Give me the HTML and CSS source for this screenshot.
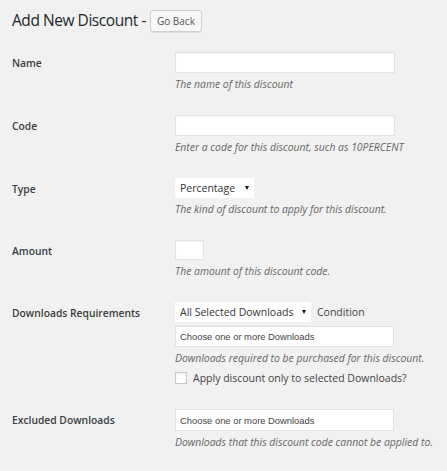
FILE: index.html
```html
<!DOCTYPE html>
<html>
<head>
<meta charset="utf-8">
<link rel="stylesheet" href="styles.css">
</head>
<body>
<div class="wrap">
  <div class="title-row">
    <h1 class="page-title">Add New Discount -</h1>
    <button class="btn">Go Back</button>
  </div>

  <div class="form-row">
    <div class="label">Name</div>
    <div class="field">
      <input class="text wide" type="text">
      <p class="desc">The name of this discount</p>
    </div>
  </div>

  <div class="form-row">
    <div class="label">Code</div>
    <div class="field">
      <input class="text wide" type="text">
      <p class="desc">Enter a code for this discount, such as 10PERCENT</p>
    </div>
  </div>

  <div class="form-row">
    <div class="label">Type</div>
    <div class="field">
      <div class="select type-select">
        <span>Percentage</span><span class="arrow"></span>
      </div>
      <p class="desc">The kind of discount to apply for this discount.</p>
    </div>
  </div>

  <div class="form-row">
    <div class="label">Amount</div>
    <div class="field">
      <input class="text small" type="text">
      <p class="desc">The amount of this discount code.</p>
    </div>
  </div>

  <div class="form-row">
    <div class="label">Downloads Requirements</div>
    <div class="field">
      <div class="inline">
        <div class="select cond-select">
          <span>All Selected Downloads</span><span class="arrow"></span>
        </div>
        <span class="plain">Condition</span>
      </div>
      <div class="chooser">Choose one or more Downloads</div>
      <p class="desc">Downloads required to be purchased for this discount.</p>
      <label class="check-row"><span class="checkbox"></span><span class="plain">Apply discount only to selected Downloads?</span></label>
    </div>
  </div>

  <div class="form-row">
    <div class="label">Excluded Downloads</div>
    <div class="field">
      <div class="chooser tall">Choose one or more Downloads</div>
      <p class="desc">Downloads that this discount code cannot be applied to.</p>
    </div>
  </div>
</div>
</body>
</html>
```

FILE: styles.css
```css
html, body {
  margin: 0;
  padding: 0;
  background: #f1f1f1;
}
body {
  font-family: "Open Sans", "Noto Sans", sans-serif;
  font-size: 10.5px;
  color: #444;
}
.wrap {
  padding: 9px 12px 0 12px;
}
.title-row {
  display: flex;
  align-items: center;
  height: 23px;
  margin-bottom: 8px;
}
.page-title {
  margin: 0;
  font-size: 15.5px;
  letter-spacing: -0.45px;
  font-weight: 400;
  color: #23282d;
  line-height: 23px;
}
.btn {
  margin-left: 4px;
  height: 22px;
  width: 52px;
  padding: 0;
  border: 1px solid #cfcfcf;
  border-radius: 3px;
  background: #f7f7f7;
  color: #555;
  font-family: "Open Sans", "Noto Sans", sans-serif;
  font-size: 10px;
  box-shadow: 0 1px 0 #ddd;
}
.form-row {
  display: grid;
  grid-template-columns: 163px 1fr;
  padding: 12px 0;
}
.label {
  font-weight: 600;
  color: #383d42;
  line-height: 23px;
  font-size: 10.3px;
}
.field {
  display: flex;
  flex-direction: column;
  align-items: flex-start;
}
.text {
  box-sizing: border-box;
  height: 21px;
  border: 1px solid #e2e2e2;
  background: #fff;
  box-shadow: inset 0 1px 2px rgba(0,0,0,0.05);
  margin: 0;
  padding: 0 4px;
}
.text.wide { width: 220px; }
.text.small { width: 29px; height: 20px; }
.desc {
  margin: 4px 0 0 0;
  font-style: italic;
  color: #666;
  line-height: 14px;
  font-size: 10.4px;
  white-space: nowrap;
}
.select {
  box-sizing: border-box;
  position: relative;
  height: 20px;
  background: #fff;
  display: flex;
  align-items: center;
  padding-left: 5px;
  color: #333;
  font-size: 10.5px;
  white-space: nowrap;
}
.type-select { width: 79px; }
.cond-select { width: 136px; }
.arrow {
  position: absolute;
  right: 5px;
  top: 8px;
  width: 0;
  height: 0;
  border-left: 2px solid transparent;
  border-right: 2px solid transparent;
  border-top: 4px solid #111;
}
.inline {
  display: flex;
  align-items: center;
  gap: 6px;
}
.plain {
  color: #444;
  font-size: 10.5px;
  white-space: nowrap;
}
.chooser {
  box-sizing: border-box;
  margin-top: 4px;
  width: 219px;
  height: 21px;
  border: 1px solid #e2e2e2;
  background: #fff;
  padding-left: 4px;
  display: flex;
  align-items: center;
  font-family: "Liberation Sans", Arial, sans-serif;
  font-size: 9.4px;
  color: #444;
}
.chooser.tall {
  margin-top: 0;
  height: 22px;
}
.check-row {
  display: flex;
  align-items: center;
  gap: 6px;
  margin-top: 6px;
  line-height: 14px;
}
.checkbox {
  box-sizing: border-box;
  width: 12px;
  height: 12px;
  border: 1px solid #c8c8c8;
  background: #fff;
  box-shadow: inset 0 1px 2px rgba(0,0,0,0.08);
}
```
